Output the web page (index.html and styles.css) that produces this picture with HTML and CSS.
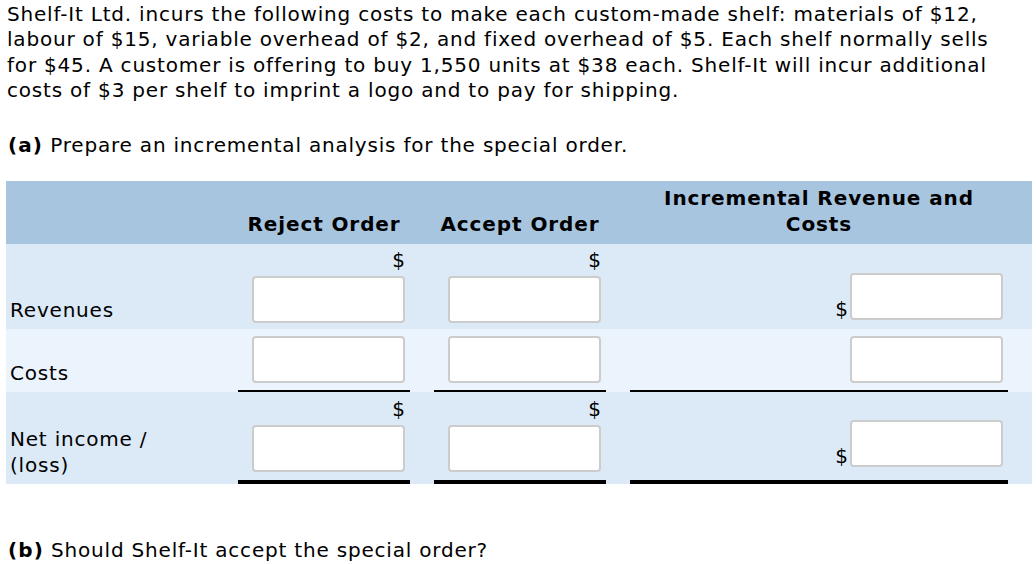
FILE: index.html
```html
<!DOCTYPE html>
<html>
<head>
<meta charset="utf-8">
<link rel="stylesheet" href="styles.css">
</head>
<body>
<p class="intro">Shelf-It Ltd. incurs the following costs to make each custom-made shelf: materials of $12,<br>labour of $15, variable overhead of $2, and fixed overhead of $5. Each shelf normally sells<br>for $45. A customer is offering to buy 1,550 units at $38 each. Shelf-It will incur additional<br>costs of $3 per shelf to imprint a logo and to pay for shipping.</p>
<p class="part part-a"><b>(a)</b> Prepare an incremental analysis for the special order.</p>
<div class="table">
  <div class="row head">
    <div class="label"></div>
    <div class="colh">Reject Order</div>
    <div class="colh">Accept Order</div>
    <div class="colh">Incremental Revenue and<br>Costs</div>
  </div>
  <div class="row rev">
    <div class="label">Revenues</div>
    <div class="cell stack"><span class="cur">$</span><input class="inp" type="text"></div>
    <div class="cell stack"><span class="cur">$</span><input class="inp" type="text"></div>
    <div class="cell side"><span class="cur">$</span><input class="inp" type="text"></div>
  </div>
  <div class="row costs">
    <div class="label">Costs</div>
    <div class="cell stack sub"><input class="inp" type="text"></div>
    <div class="cell stack sub"><input class="inp" type="text"></div>
    <div class="cell side sub"><input class="inp" type="text"></div>
  </div>
  <div class="row net">
    <div class="label">Net income /<br>(loss)</div>
    <div class="cell stack total"><span class="cur">$</span><input class="inp" type="text"></div>
    <div class="cell stack total"><span class="cur">$</span><input class="inp" type="text"></div>
    <div class="cell side total"><span class="cur">$</span><input class="inp" type="text"></div>
  </div>
</div>
<p class="part part-b"><b>(b)</b> Should Shelf-It accept the special order?</p>
</body>
</html>
```
FILE: styles.css
```css
html, body {
  margin: 0;
  padding: 0;
  background: #ffffff;
}
body {
  font-family: "DejaVu Sans", Verdana, sans-serif;
  font-size: 20px;
  letter-spacing: 0.8px;
  color: #000000;
  padding: 0 6px;
}
b {
  letter-spacing: 1.1px;
}
.intro {
  margin: 2px 0 0 1px;
  line-height: 25.3px;
}
.part {
  margin: 0;
  line-height: 26px;
  padding-left: 2px;
}
.part-a {
  margin-top: 29px;
}
.part-b {
  margin-top: 53px;
}
.table {
  margin-top: 23px;
  width: 1026px;
}
.row {
  display: grid;
  grid-template-columns: 208px 172px 172px 378px;
  column-gap: 24px;
  padding-right: 24px;
}
.head {
  background: #a8c5df;
  height: 63px;
  font-weight: bold;
  letter-spacing: 0.9px;
}
.rev, .net {
  background: #dce9f6;
}
.costs {
  background: #ebf3fd;
}
.label {
  padding: 0 0 6px 4px;
  line-height: 26px;
  align-self: end;
  letter-spacing: 0.8px;
}
.colh {
  align-self: end;
  text-align: center;
  line-height: 26px;
  padding-bottom: 7px;
  white-space: nowrap;
}
.cell {
  display: flex;
  padding-right: 5px;
}
.stack {
  flex-direction: column;
  align-items: flex-end;
  justify-content: flex-end;
}
.side {
  flex-direction: row;
  align-items: flex-end;
  justify-content: flex-end;
}
.cur {
  line-height: 24px;
  letter-spacing: 0;
}
.stack .cur {
  margin-bottom: 4px;
}
.side .cur {
  line-height: 22px;
  margin-right: 2px;
}
.rev .stack {
  padding-top: 4px;
  padding-bottom: 6px;
}
.rev .side {
  padding-bottom: 9px;
}
.sub {
  border-bottom: 2px solid #000;
  padding-top: 7px;
  padding-bottom: 7px;
}
.total {
  border-bottom: 4px solid #000;
}
.net .stack {
  padding-top: 5px;
  padding-bottom: 8px;
}
.net .side {
  padding-bottom: 13px;
}
.inp {
  box-sizing: border-box;
  width: 153px;
  height: 47px;
  margin: 0;
  padding: 0 8px;
  border: 2px solid #cccccc;
  border-radius: 4px;
  background: #ffffff;
  font: inherit;
}
```
